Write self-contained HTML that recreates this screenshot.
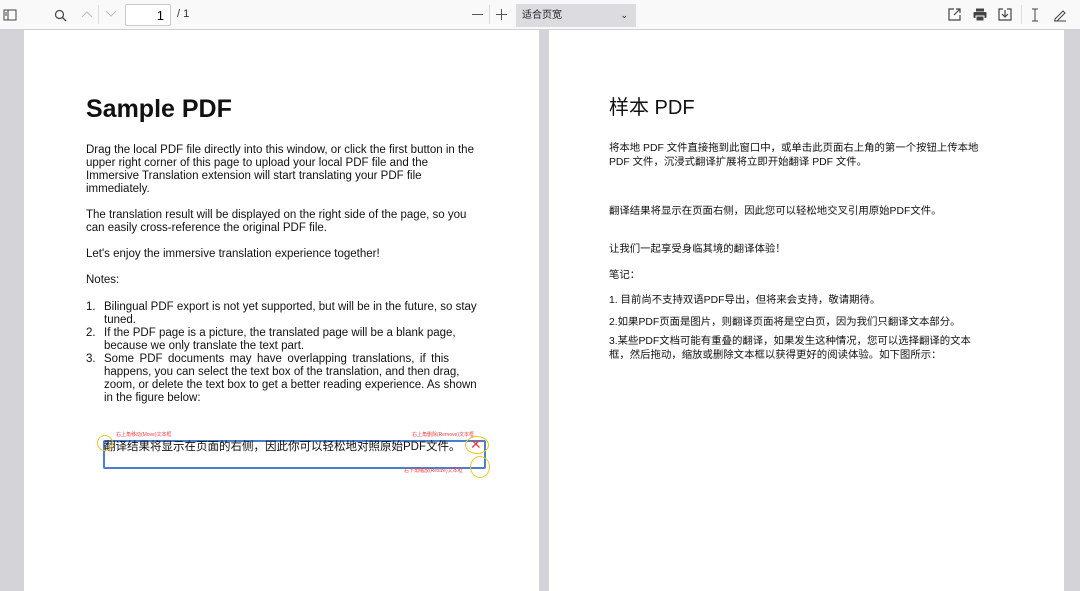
<!DOCTYPE html>
<html><head><meta charset="utf-8"><style>
body{margin:0;width:1080px;height:591px;background:#d4d4d8;overflow:hidden;font-family:"Liberation Sans","Noto Sans CJK SC",sans-serif;position:relative}
.tb{position:absolute;left:0;top:0;width:1080px;height:29px;background:#f9f9fa;border-bottom:1px solid #d0d0d4}
.page{position:absolute;top:30px;height:561px;background:#fff}
.t{position:absolute;color:#111;font-size:11.5px;line-height:13px;white-space:nowrap}
.c{position:absolute;color:#111;font-size:10.4px;line-height:14px;white-space:nowrap}
.ic{position:absolute;color:#555}
</style></head><body>
<div class="tb">
<svg class="ic" style="left:3px;top:9px" width="14" height="12"><rect x="1" y="1" width="12" height="10" fill="none" stroke="#444"/><line x1="5" y1="1" x2="5" y2="11" stroke="#444"/><line x1="2" y1="4" x2="4" y2="4" stroke="#444"/><line x1="2" y1="6" x2="4" y2="6" stroke="#444"/></svg>
<svg class="ic" style="left:54px;top:9px" width="14" height="14"><circle cx="5.5" cy="5.5" r="4" fill="none" stroke="#444" stroke-width="1.2"/><line x1="8.5" y1="8.5" x2="12" y2="12" stroke="#444" stroke-width="1.3"/></svg>
<svg class="ic" style="left:81px;top:10px" width="12" height="8"><polyline points="1,7 6,2 11,7" fill="none" stroke="#bbb"/></svg>
<div style="position:absolute;left:98px;top:5px;width:1px;height:19px;background:#ddd"></div>
<svg class="ic" style="left:105px;top:10px" width="12" height="8"><polyline points="1,1 6,6 11,1" fill="none" stroke="#bbb"/></svg>
<div style="position:absolute;left:125px;top:4px;width:46px;height:22px;background:#fff;border:1px solid #ccc;border-radius:2px;text-align:right;font-size:13px;line-height:22px;box-sizing:border-box;padding-right:6px">1</div>
<div style="position:absolute;left:177px;top:8px;font-size:11px;color:#333">/ 1</div>
<div style="position:absolute;left:472px;top:14px;width:11px;height:1px;background:#555"></div>
<div style="position:absolute;left:489px;top:5px;width:1px;height:19px;background:#ddd"></div>
<div style="position:absolute;left:496px;top:14px;width:11px;height:1px;background:#555"></div>
<div style="position:absolute;left:501px;top:9px;width:1px;height:11px;background:#555"></div>
<div style="position:absolute;left:516px;top:4px;width:120px;height:23px;background:#dcdce0;font-size:10px;line-height:23px;padding-left:6px;box-sizing:border-box;color:#222">适合页宽<span style="position:absolute;right:8px;top:0;font-size:9px">⌄</span></div>
<svg class="ic" style="left:948px;top:8px" width="13" height="13"><path d="M6 1H1v11h11V7M8 1h4v4M12 1L6 7" fill="none" stroke="#444" stroke-width="1.2"/></svg>
<svg class="ic" style="left:973px;top:8px" width="14" height="13"><rect x="3" y="0.5" width="8" height="3" fill="#444"/><rect x="0.5" y="4" width="13" height="6" rx="1" fill="#444"/><rect x="3" y="8" width="8" height="5" fill="#444" stroke="#fff"/></svg>
<svg class="ic" style="left:998px;top:8px" width="14" height="13"><path d="M5 1H1v11h12V1H9M7 2v7M4 6l3 3 3-3" fill="none" stroke="#444" stroke-width="1.2"/></svg>
<div style="position:absolute;left:1021px;top:5px;width:1px;height:19px;background:#ddd"></div>
<svg class="ic" style="left:1031px;top:8px" width="8" height="14"><path d="M1 1h6M4 1v12M1 13h6" fill="none" stroke="#444"/></svg>
<svg class="ic" style="left:1053px;top:8px" width="14" height="14"><path d="M2 11L10 3l2 2-8 8H2zM1 13h12" fill="none" stroke="#444"/></svg>
</div>
<div class="page" style="left:24px;width:515px"></div>
<div class="page" style="left:549px;width:515px"></div>

<div class="t" style="left:86px;top:94px;font-size:25px;line-height:30px;font-weight:bold">Sample PDF</div>
<div class="t" style="left:86px;top:144px">Drag the local PDF file directly into this window, or click the first button in the<br>upper right corner of this page to upload your local PDF file and the<br>Immersive Translation extension will start translating your PDF file<br>immediately.</div>
<div class="t" style="left:86px;top:209px">The translation result will be displayed on the right side of the page, so you<br>can easily cross-reference the original PDF file.</div>
<div class="t" style="left:86px;top:248px">Let's enjoy the immersive translation experience together!</div>
<div class="t" style="left:86px;top:274px">Notes:</div>
<div class="t" style="left:86px;top:301px">1.</div><div class="t" style="left:104px;top:301px">Bilingual PDF export is not yet supported, but will be in the future, so stay<br>tuned.</div>
<div class="t" style="left:86px;top:327px">2.</div><div class="t" style="left:104px;top:327px">If the PDF page is a picture, the translated page will be a blank page,<br>because we only translate the text part.</div>
<div class="t" style="left:86px;top:353px">3.</div><div class="t" style="left:104px;top:353px;word-spacing:2.3px">Some PDF documents may have overlapping translations, if this</div>
<div class="t" style="left:104px;top:366px">happens, you can select the text box of the translation, and then drag,<br>zoom, or delete the text box to get a better reading experience. As shown<br>in the figure below:</div>

<div style="position:absolute;left:103px;top:440px;width:379px;height:25px;border:2px solid #4a7fd0;border-radius:2px"></div>
<div class="t" style="left:104px;top:441px;font-size:11.5px">翻译结果将显示在页面的右侧，因此你可以轻松地对照原始PDF文件。</div>
<div style="position:absolute;left:116px;top:431px;font-size:5px;color:#e44">右上角移动(Move)文本框</div>
<div style="position:absolute;left:412px;top:431px;font-size:5px;color:#e44">右上角删除(Remove)文本框</div>
<div style="position:absolute;left:404px;top:467px;font-size:5px;color:#e44">右下角缩放(Resize)文本框</div>
<div style="position:absolute;left:470px;top:436px;font-size:14px;color:#d44">✕</div>
<div style="position:absolute;left:97px;top:435px;width:14px;height:14px;border:1.5px solid #f5c518;border-radius:50%"></div>
<div style="position:absolute;left:465px;top:436px;width:22px;height:16px;border:1.5px solid #f5c518;border-radius:50%"></div>
<div style="position:absolute;left:470px;top:456px;width:18px;height:20px;border:1.5px solid #f5c518;border-radius:50%"></div>

<div class="c" style="left:609px;top:95px;font-size:20px;line-height:26px">样本 PDF</div>
<div class="c" style="left:609px;top:142px">将本地 PDF 文件直接拖到此窗口中，或单击此页面右上角的第一个按钮上传本地<br>PDF 文件，沉浸式翻译扩展将立即开始翻译 PDF 文件。</div>
<div class="c" style="left:609px;top:205px">翻译结果将显示在页面右侧，因此您可以轻松地交叉引用原始PDF文件。</div>
<div class="c" style="left:609px;top:243px">让我们一起享受身临其境的翻译体验！</div>
<div class="c" style="left:609px;top:269px">笔记：</div>
<div class="c" style="left:609px;top:294px">1. 目前尚不支持双语PDF导出，但将来会支持，敬请期待。</div>
<div class="c" style="left:609px;top:316px">2.如果PDF页面是图片，则翻译页面将是空白页，因为我们只翻译文本部分。</div>
<div class="c" style="left:609px;top:335px">3.某些PDF文档可能有重叠的翻译，如果发生这种情况，您可以选择翻译的文本<br>框，然后拖动，缩放或删除文本框以获得更好的阅读体验。如下图所示：</div>
</body></html>
